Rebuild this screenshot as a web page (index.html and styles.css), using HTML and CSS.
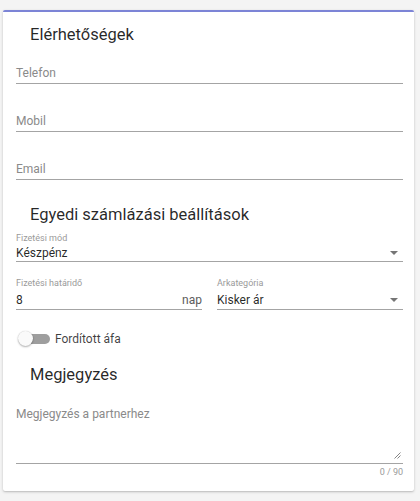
FILE: index.html
```html
<!DOCTYPE html>
<html lang="hu">
<head>
<meta charset="utf-8">
<title>Partner</title>
<link rel="stylesheet" href="styles.css">
</head>
<body>
<div class="card">
  <h2 class="title t1">Elérhetőségek</h2>
  <div class="field"><span class="ph">Telefon</span></div>
  <div class="field"><span class="ph">Mobil</span></div>
  <div class="field last"><span class="ph">Email</span></div>

  <h2 class="title t2">Egyedi számlázási beállítások</h2>
  <div class="select">
    <div class="small">Fizetési mód</div>
    <div class="value-row"><span class="value">Készpénz</span>
      <svg class="arrow" width="8" height="4" viewBox="0 0 8 4"><path d="M0 0 L8 0 L4 4 Z" fill="#757575"/></svg>
    </div>
  </div>
  <div class="row">
    <div class="select col">
      <div class="small">Fizetési határidő</div>
      <div class="value-row"><span class="value">8</span><span class="suffix">nap</span></div>
    </div>
    <div class="select col">
      <div class="small">Arkategória</div>
      <div class="value-row"><span class="value">Kisker ár</span>
        <svg class="arrow" width="8" height="4" viewBox="0 0 8 4"><path d="M0 0 L8 0 L4 4 Z" fill="#757575"/></svg>
      </div>
    </div>
  </div>
  <div class="switch-row">
    <span class="switch"><span class="track"></span><span class="thumb"></span></span>
    <span class="switch-label">Fordított áfa</span>
  </div>

  <h2 class="title t3">Megjegyzés</h2>
  <div class="textarea">
    <span class="ph">Megjegyzés a partnerhez</span>
    <svg class="resize" width="7" height="7" viewBox="0 0 7 7"><path d="M6.5 0.5 L0.5 6.5 M6.5 3.5 L3.5 6.5" stroke="#777" stroke-width="0.9" fill="none"/></svg>
  </div>
  <div class="counter">0 / 90</div>
</div>
</body>
</html>
```

FILE: styles.css
```css
html, body {
  margin: 0;
  padding: 0;
}
body {
  background: #f4f4f4;
  font-family: Roboto, "Liberation Sans", sans-serif;
  padding: 10px 6px 0 3px;
  height: 501px;
  box-sizing: border-box;
}
.card {
  background: #fff;
  border-top: 2px solid #7c84d6;
  border-radius: 2px;
  box-shadow: 0 1px 3px rgba(0,0,0,0.18), 0 1px 1px rgba(0,0,0,0.08);
  padding: 0 11px 13px 13px;
}
.title {
  margin: 0 0 0 14px;
  font-size: 16.5px;
  font-weight: 400;
  line-height: 24px;
  color: rgba(0,0,0,0.85);
}
.t1 { padding-top: 11px; }
.t2 { padding-top: 23px; }
.t3 { padding-top: 15px; }
.field {
  height: 36px;
  box-sizing: content-box;
  border-bottom: 1px solid #a4a4a4;
  padding-top: 0;
  margin-bottom: 11px;
  display: flex;
  flex-direction: column;
}
.field.last { margin-bottom: 0; }
.field .ph {
  margin-top: 18px;
  line-height: 16px;
}
.ph {
  font-size: 12px;
  color: #8a8a8a;
}
.select {
  border-bottom: 1px solid #a4a4a4;
  padding-top: 5px;
}
.small {
  font-size: 9px;
  line-height: 12px;
  color: #9a9a9a;
}
.value-row {
  display: flex;
  align-items: center;
  justify-content: space-between;
  height: 17px;
}
.value {
  font-size: 12px;
  color: rgba(0,0,0,0.85);
}
.arrow {
  margin-right: 5px;
}
.row {
  display: grid;
  grid-template-columns: 1fr 1fr;
  column-gap: 15px;
}
.row .select {
  padding-top: 15px;
}
.row .small {
  margin-bottom: 2px;
}
.row .value-row {
  height: 18px;
}
.suffix {
  font-size: 12px;
  color: #5c5c5c;
}
.switch-row {
  display: flex;
  align-items: center;
  height: 18px;
  margin-top: 20px;
}
.switch {
  position: relative;
  width: 33px;
  height: 16px;
  margin-left: 2px;
  margin-right: 4px;
  display: inline-block;
}
.track {
  position: absolute;
  left: 3px;
  top: 3px;
  width: 29px;
  height: 10px;
  border-radius: 5px;
  background: #9e9e9e;
}
.thumb {
  position: absolute;
  left: 0;
  top: 0;
  width: 15px;
  height: 15px;
  border-radius: 50%;
  background: #fafafa;
  box-shadow: 0 1px 2px rgba(0,0,0,0.3), 0 0 1px rgba(0,0,0,0.2);
}
.switch-label {
  font-size: 12px;
  color: rgba(0,0,0,0.75);
}
.textarea {
  position: relative;
  height: 57px;
  padding-top: 19px;
  border-bottom: 1px solid #a4a4a4;
}
.textarea .ph {
  display: block;
  line-height: 16px;
}
.resize {
  position: absolute;
  right: 2px;
  bottom: 4px;
}
.counter {
  text-align: right;
  font-size: 9px;
  line-height: 12px;
  margin-top: 2px;
  color: #9a9a9a;
}
```
